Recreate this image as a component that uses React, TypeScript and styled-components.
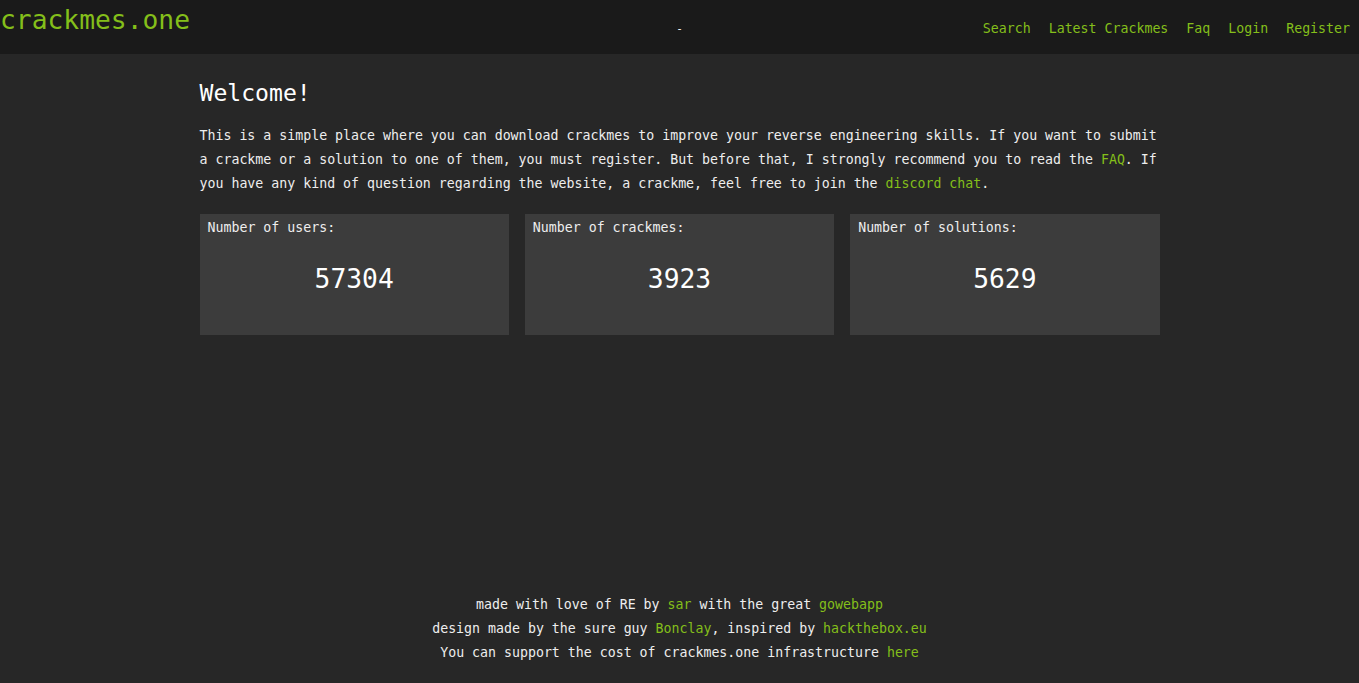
import React from 'react'
import styled, { createGlobalStyle } from 'styled-components'

const GlobalStyle = createGlobalStyle`
  html, body {
    margin: 0;
    padding: 0;
    background-color: #272727;
  }
  body {
    font-family: 'DejaVu Sans Mono', 'Liberation Mono', monospace;
    font-size: 13.25px;
    color: #eeeeee;
  }
`

const Page = styled.div`
  display: flex;
  flex-direction: column;
  min-height: 100vh;
`

const Header = styled.header`
  display: grid;
  grid-template-columns: 1fr auto 1fr;
  height: 54px;
  background-color: #1a1a1a;
`

const Logo = styled.a`
  align-self: start;
  justify-self: start;
  font-size: 26.3px;
  line-height: 40px;
  color: #84bf1a;
  text-decoration: none;
`

const Dash = styled.span`
  align-self: center;
  padding-top: 2px;
  color: #ffffff;
  font-size: 11px;
`

const Nav = styled.nav`
  display: flex;
  gap: 18px;
  align-self: center;
  justify-self: end;
  padding: 4px 9px 0 0;
  line-height: 24px;
`

const Link = styled.a`
  color: #84bf1a;
  text-decoration: none;
`

const Main = styled.main`
  width: 960px;
  margin: 0 auto;
  padding-top: 25px;
`

const Title = styled.h1`
  margin: 0 0 17px;
  font-size: 23.1px;
  font-weight: normal;
  line-height: 28px;
  color: #ffffff;
`

const Intro = styled.p`
  margin: 0 0 18px;
  line-height: 24px;
`

const Stats = styled.div`
  display: grid;
  grid-template-columns: repeat(3, 1fr);
  gap: 16px;
`

const Card = styled.div`
  height: 121px;
  box-sizing: border-box;
  padding: 5px 8px;
  background-color: #3c3c3c;
`

const CardLabel = styled.div`
  line-height: 18px;
`

const CardValue = styled.div`
  margin-top: 22px;
  text-align: center;
  font-size: 26.3px;
  line-height: 40px;
  color: #ffffff;
`

const Footer = styled.footer`
  margin-top: auto;
  padding-bottom: 18px;
  text-align: center;
  line-height: 24px;
`

const stats = [
  { label: 'Number of users:', value: 57304 },
  { label: 'Number of crackmes:', value: 3923 },
  { label: 'Number of solutions:', value: 5629 },
]

const App: React.FC = () => {
  return (
    <Page>
      <GlobalStyle />
      <Header>
        <Logo href="#">crackmes.one</Logo>
        <Dash>-</Dash>
        <Nav>
          <Link href="#">Search</Link>
          <Link href="#">Latest Crackmes</Link>
          <Link href="#">Faq</Link>
          <Link href="#">Login</Link>
          <Link href="#">Register</Link>
        </Nav>
      </Header>
      <Main>
        <Title>Welcome!</Title>
        <Intro>
          This is a simple place where you can download crackmes to improve your reverse engineering skills. If you want to submit a crackme or a solution to one of them, you must register. But before that, I strongly recommend you to read the <Link href="#">FAQ</Link>. If you have any kind of question regarding the website, a crackme, feel free to join the <Link href="#">discord chat</Link>.
        </Intro>
        <Stats>
          {stats.map((s) => (
            <Card key={s.label}>
              <CardLabel>{s.label}</CardLabel>
              <CardValue>{s.value}</CardValue>
            </Card>
          ))}
        </Stats>
      </Main>
      <Footer>
        <div>made with love of RE by <Link href="#">sar</Link> with the great <Link href="#">gowebapp</Link></div>
        <div>design made by the sure guy <Link href="#">Bonclay</Link>, inspired by <Link href="#">hackthebox.eu</Link></div>
        <div>You can support the cost of crackmes.one infrastructure <Link href="#">here</Link></div>
      </Footer>
    </Page>
  )
}

export default App
